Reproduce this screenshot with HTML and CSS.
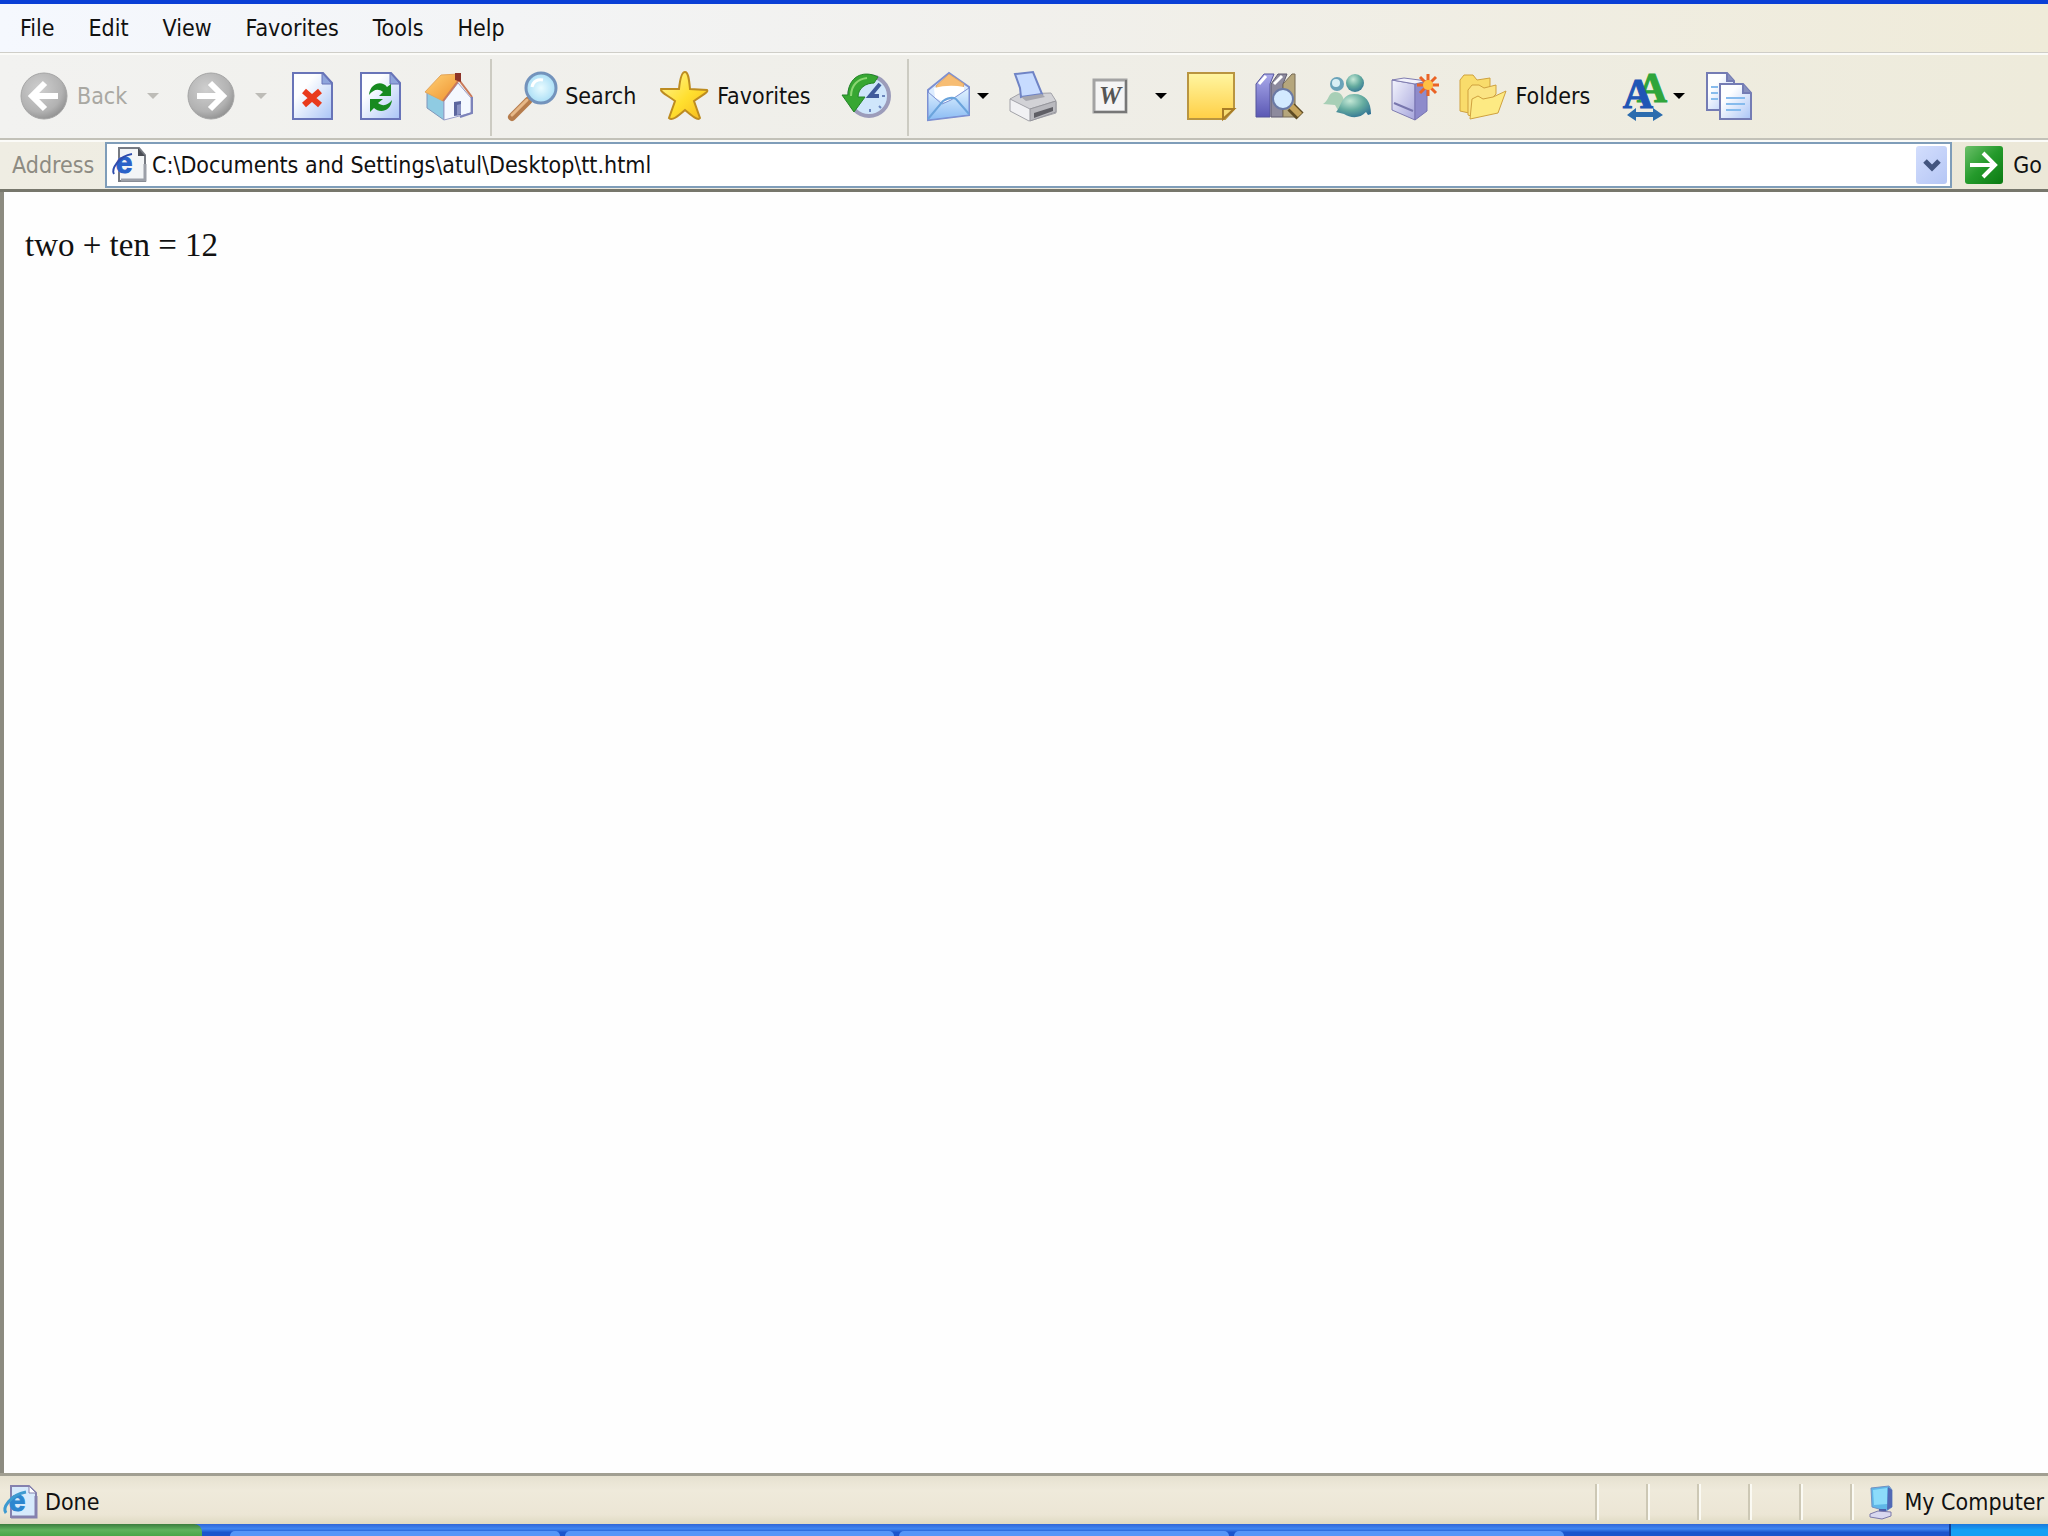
FILE: index.html
```html
<!DOCTYPE html>
<html lang="en">
<head>
<meta charset="utf-8">
<title>tt.html</title>
<link rel="stylesheet" href="styles.css">
</head>
<body>
<svg class="defs" aria-hidden="true">
  <defs>
    <radialGradient id="disc" cx=".4" cy=".35" r=".7"><stop offset="0" stop-color="#cfcfcf"/><stop offset=".7" stop-color="#b2b2b2"/><stop offset="1" stop-color="#8e8e8e"/></radialGradient>
    <linearGradient id="sheet" x1="0" y1="0" x2="1" y2="1"><stop offset=".3" stop-color="#fdfeff"/><stop offset="1" stop-color="#a9c4f6"/></linearGradient>
    <linearGradient id="roof" x1="0" y1="0" x2="1" y2="1"><stop offset="0" stop-color="#ffd277"/><stop offset="1" stop-color="#ee8f2b"/></linearGradient>
    <linearGradient id="note" x1="0" y1="0" x2="0" y2="1"><stop offset="0" stop-color="#fff6a2"/><stop offset="1" stop-color="#ffcf45"/></linearGradient>
    <linearGradient id="gold" x1="0" y1="0" x2="1" y2="1"><stop offset="0" stop-color="#fff59a"/><stop offset=".55" stop-color="#ffdf2e"/><stop offset="1" stop-color="#f7b71c"/></linearGradient>
    <radialGradient id="glass"><stop offset="0" stop-color="#e9fbff"/><stop offset="1" stop-color="#a9def6"/></radialGradient>
    <linearGradient id="mail" x1="0" y1="0" x2="0" y2="1"><stop offset="0" stop-color="#e4f4ff"/><stop offset="1" stop-color="#8bbcf4"/></linearGradient>
    <linearGradient id="book" x1="0" y1="0" x2="0" y2="1"><stop offset="0" stop-color="#a9a9ea"/><stop offset="1" stop-color="#5b58b4"/></linearGradient>
    <radialGradient id="teal" cx=".4" cy=".3" r=".8"><stop offset="0" stop-color="#c4e8d6"/><stop offset=".5" stop-color="#64ab9f"/><stop offset="1" stop-color="#2c6d92"/></radialGradient>
    <linearGradient id="box" x1="0" y1="0" x2="1" y2="1"><stop offset="0" stop-color="#f3f4fd"/><stop offset="1" stop-color="#a7a6dc"/></linearGradient>
    <linearGradient id="go" x1="0" y1="0" x2="1" y2="1"><stop offset="0" stop-color="#6cc06a"/><stop offset=".5" stop-color="#249a2b"/><stop offset="1" stop-color="#0b7a12"/></linearGradient>
  </defs>
</svg>

<nav class="menu" aria-label="Menu bar">
  <button class="menu-item">File</button>
  <button class="menu-item">Edit</button>
  <button class="menu-item">View</button>
  <button class="menu-item">Favorites</button>
  <button class="menu-item">Tools</button>
  <button class="menu-item">Help</button>
</nav>

<div class="toolbar" role="toolbar" aria-label="Standard buttons">
  <button class="tool history-nav back" disabled>
    <svg class="icon" viewBox="0 0 48 48"><circle cx="24" cy="24" r="23" fill="url(#disc)" stroke="#a5a5a5"/><path d="M38 24H12M25 11 12 24l13 13" fill="none" stroke="#fff" stroke-width="6"/></svg>
    <span class="label">Back</span>
    <svg class="arrow" viewBox="0 0 12 6"><path d="M0 0h12L6 6z"/></svg>
  </button>
  <button class="tool history-nav" disabled aria-label="Forward">
    <svg class="icon" viewBox="0 0 48 48"><circle cx="24" cy="24" r="23" fill="url(#disc)" stroke="#a5a5a5"/><path d="M10 24h26M23 11l13 13-13 13" fill="none" stroke="#fff" stroke-width="6"/></svg>
    <svg class="arrow" viewBox="0 0 12 6"><path d="M0 0h12L6 6z"/></svg>
  </button>
  <button class="tool" aria-label="Stop">
    <svg class="icon" viewBox="0 0 48 48"><path d="M4 1h30l9 10v36H4z" fill="url(#sheet)" stroke="#6874b8" stroke-width="2"/><path d="M33 1v11h10z" fill="#8fa5dc" stroke="#6874b8"/><path d="M15 19l16 14M31 19 15 33" stroke="#e93a1c" stroke-width="6"/></svg>
  </button>
  <button class="tool" aria-label="Refresh">
    <svg class="icon" viewBox="0 0 48 48"><path d="M4 1h30l9 10v36H4z" fill="url(#sheet)" stroke="#6874b8" stroke-width="2"/><path d="M33 1v11h10z" fill="#8fa5dc" stroke="#6874b8"/><path d="M12 23c1-12 13-15 18-8l4-3v12H22l4-4c-5-4-10-2-14 3zM35 28c-1 11-12 14-18 8l-4 4V27h13l-5 4c5 4 10 2 14-3z" fill="#178a20"/></svg>
  </button>
  <button class="tool" aria-label="Home">
    <svg class="icon" viewBox="0 0 48 48"><path d="M2 20v16l17 12V29z" fill="#8fcbe2" stroke="#7f96bb"/><path d="M19 29 33 11l13 15v15l-27 7z" fill="#f4f8ff" stroke="#9a9fca"/><path d="M0 20 16 3l18-1 1 4-17 23z" fill="url(#roof)" stroke="#e3a65c"/><path d="M18 29 34 8l13 17" fill="none" stroke="#c9795a" stroke-width="2"/><path d="M47 25v16l-12 4" fill="none" stroke="#7d83ba" stroke-width="2"/><path d="M30 1h6v9l-6-2z" fill="#8c3327"/><path d="M29 30l7-1v14l-7 1z" fill="#5c669e"/><path d="M32 33l4-1v10l-4 1z" fill="#8a93c4"/></svg>
  </button>
  <span class="divider"></span>
  <button class="tool labelled search">
    <svg class="icon" viewBox="0 0 48 48"><path d="M4 45 20 29" stroke="#b67c4c" stroke-width="8" stroke-linecap="round"/><path d="M4 43 19 28" stroke="#e7b887" stroke-width="3" stroke-linecap="round"/><circle cx="33" cy="16" r="15" fill="url(#glass)" stroke="#7393bc" stroke-width="3"/><path d="M24 15c1-6 6-8 11-7" fill="none" stroke="#fff" stroke-width="3"/></svg>
    <span class="label">Search</span>
  </button>
  <button class="tool labelled">
    <svg class="icon" viewBox="0 0 48 48"><path d="M25 0c3 0 4 6 5 17l17 1c2 2-5 5-13 11l6 17c-2 3-8-2-15-8-8 7-13 11-16 8l6-17C7 23 0 20 1 17l18 0C20 7 22 0 25 0z" fill="url(#gold)" stroke="#bd8c21" stroke-width="2"/></svg>
    <span class="label">Favorites</span>
  </button>
  <button class="tool" aria-label="History">
    <svg class="icon" viewBox="0 0 48 48"><circle cx="27" cy="24" r="20" fill="#cfe6fb" stroke="#9c9cba" stroke-width="4"/><path d="M38 12 28 24h9" fill="none" stroke="#415c9c" stroke-width="4"/><path d="M28 9v3M43 24h-3M28 40v-3M39 36l-2-2" fill="none" stroke="#6c86bd" stroke-width="2"/><path d="M36 5C20-3 6 6 6 23H0l12 17 11-15h-7c0-9 8-14 16-14z" fill="#37a732" stroke="#258428"/><path d="M9 24c0-11 7-17 16-18" fill="none" stroke="#8bd672" stroke-width="2"/></svg>
  </button>
  <span class="divider"></span>
  <button class="tool split" aria-label="Mail">
    <svg class="icon" viewBox="0 0 48 48"><path d="M3 18 24 1l20 14v28L3 48z" fill="#dcecff" stroke="#7c90d2" stroke-width="2"/><path d="M11 14 24 2l15 10-3 12-22 1z" fill="#f7bd73" stroke="#d9a26b"/><path d="M9 16q15-4 30-1v10l-14 7-15-6z" fill="#fff"/><path d="M3 20l14 12 9-4 18-12v27L3 48z" fill="url(#mail)" stroke="#7c90d2"/><path d="M3 47 18 29q8-5 13-2l13 15" fill="none" stroke="#6ba4dc" stroke-width="2"/></svg>
    <svg class="arrow" viewBox="0 0 12 6"><path d="M0 0h12L6 6z"/></svg>
  </button>
  <button class="tool" aria-label="Print">
    <svg class="icon" viewBox="0 0 48 48"><path d="M1 27v12l19 10 27-8V30z" fill="#f1f1f3" stroke="#a2a2a8"/><path d="M1 27 10 22l32-1 5 8-26 8z" fill="#d2d2d6" stroke="#a2a2a8"/><path d="M6 2 24 0l9 22-21 3-1-9z" fill="#c7dbff" stroke="#6f83c5" stroke-width="2"/><path d="M12 25l21-3 3 3-19 4z" fill="#a6a6ae"/><path d="M21 37l26-8v11l-26 9z" fill="#b9b9be" stroke="#96969c"/><path d="M25 41l19-6v4l-19 7z" fill="#5f5f65"/></svg>
  </button>
  <button class="tool split-wide" aria-label="Edit with Word">
    <svg class="icon" viewBox="0 0 48 48"><path d="M8 8h32v32H8z" fill="#f5f5f5" stroke="#a3a3a3" stroke-width="3"/><path d="M40 8v32H8" fill="none" stroke="#777" stroke-width="2"/><text x="24" y="32" class="word-mark">W</text></svg>
    <svg class="arrow" viewBox="0 0 12 6"><path d="M0 0h12L6 6z"/></svg>
  </button>
  <button class="tool" aria-label="Notes">
    <svg class="icon" viewBox="0 0 48 48"><path d="M1 1h46v36l-9 10H1z" fill="url(#note)" stroke="#b99540" stroke-width="2"/><path d="M36 47V37h11z" fill="#f7dc73" stroke="#a87c26" stroke-width="2"/></svg>
  </button>
  <button class="tool" aria-label="Research">
    <svg class="icon" viewBox="0 0 48 48"><path d="M1 12 9 2h10l-4 10v33H1z" fill="url(#book)" stroke="#55549b"/><path d="M16 12 23 2h9l-4 10v33H16z" fill="#8d8a9d" stroke="#5e5b70"/><path d="M28 12l9-10h3v43H28z" fill="#b5a67c" stroke="#766b55"/><path d="M4 12 11 4M19 12l8-8" stroke="#fff" stroke-width="3"/><path d="M36 35l9 9" stroke="#5f4c24" stroke-width="10"/><path d="M36 34l9 9" stroke="#c5a45d" stroke-width="6"/><circle cx="28" cy="27" r="10" fill="#d3eaff" stroke="#6a7aa6" stroke-width="2"/></svg>
  </button>
  <button class="tool" aria-label="Messenger">
    <svg class="icon" viewBox="0 0 48 48"><path d="M0 32c6-3 5-12 12-12 7 0 9 6 10 14l-6 6-4-7z" fill="#a8cfb6"/><circle cx="14" cy="12" r="7" fill="#6aa3b9"/><circle cx="13" cy="11" r="4" fill="#d8eff5"/><path d="M13 40c5-4 5-18 18-18 12 0 17 8 17 20l-3 1-2-3c-6 7-16 6-22 2z" fill="url(#teal)"/><circle cx="32" cy="11" r="9" fill="url(#teal)"/></svg>
  </button>
  <button class="tool" aria-label="New window">
    <svg class="icon" viewBox="0 0 48 48"><path d="M1 8 24 12v36L1 38z" fill="url(#box)" stroke="#7f7cb0"/><path d="M24 12l12-3v30L24 48z" fill="#8e8bcb" stroke="#7673b2"/><path d="M1 8 13 6l23 3-12 3z" fill="#f2f2fb" stroke="#7f7cb0"/><path d="M3 31l19 8" stroke="#7876ad" stroke-width="2"/><path d="M37 2v22M26 13h22M29 5l16 16M45 5 29 21" stroke="#ea6325" stroke-width="3"/><circle cx="37" cy="13" r="5" fill="#ffc044"/></svg>
  </button>
  <button class="tool labelled">
    <svg class="icon" viewBox="0 0 48 48"><g stroke="#cfa13f"><path d="M1 39V8l4-5h9l4 5 13-2v8L10 41z" fill="#f9dc6b"/><path d="M9 43V18l4-5h7l5 3 12-3v9L15 45z" fill="#fbe483"/><path d="M11 47l2-20 6-3 5 3 10-2 13-6-8 22z" fill="#fdea83"/></g></svg>
    <span class="label">Folders</span>
  </button>
  <button class="tool split" aria-label="Text size">
    <svg class="icon" viewBox="0 0 48 48"><text x="31" y="30" class="size-mark size-mark-back">A</text><text x="17" y="36" class="size-mark">A</text><path d="M6 43 15 36v4h17v-4l10 7-10 6v-4H15v4z" fill="#2b6cae"/></svg>
    <svg class="arrow" viewBox="0 0 12 6"><path d="M0 0h12L6 6z"/></svg>
  </button>
  <button class="tool" aria-label="Copy">
    <svg class="icon" viewBox="0 0 48 48"><g fill="url(#sheet)" stroke="#747cb4" stroke-width="2"><path d="M2 1h20l7 8v29H2z"/><path d="M22 1v8h7" fill="#8790bd"/><path d="M15 12h23l8 9v26H15z"/><path d="M38 12v9h8" fill="#8790bd"/></g><path d="M6 15h7M6 21h7M6 27h7M21 26h19M21 32h19M21 38h15" stroke="#86bbed" stroke-width="2"/></svg>
  </button>
</div>

<form class="address">
  <label class="address-label" for="url">Address</label>
  <div class="combo">
    <svg class="page-icon" viewBox="0 0 36 36"><path d="M8 1h20l6 7v26H8z" fill="#f3f5f6" stroke="#777b83" stroke-width="2"/><path d="M27 1v8h7z" fill="#4a4d54"/><path d="M10 33h24V17" fill="none" stroke="#9ca0a8" stroke-width="3"/><text x="13" y="26" class="ie-mark">e</text><path d="M3 27C0 22 8 9 21 7" fill="none" stroke="#2f4dad" stroke-width="2"/></svg>
    <input id="url" class="url" type="text" value="C:\Documents and Settings\atul\Desktop\tt.html" spellcheck="false">
    <button class="drop" type="button" aria-label="Show addresses"><svg viewBox="0 0 18 13"><path d="M2 2l7 7 7-7" fill="none" stroke="#43557f" stroke-width="5"/></svg></button>
  </div>
  <button class="go" type="button">
    <svg class="go-icon" viewBox="0 0 38 38"><rect width="38" height="38" rx="3" fill="url(#go)"/><path d="M5 19h23M18 7l12 12-12 12" fill="none" stroke="#fff" stroke-width="4"/></svg>
    <span>Go</span>
  </button>
</form>

<main class="document">
  <p class="result">two + ten = 12</p>
</main>

<footer class="status">
  <svg class="page-icon" viewBox="0 0 36 36"><path d="M9 2h18l7 7v24H9z" fill="#d7eafc" stroke="#8581ae" stroke-width="2"/><path d="M27 2v7h7z" fill="#fff" stroke="#8581ae"/><path d="M9 33h25V12" fill="none" stroke="#8581ae" stroke-width="3"/><text x="15" y="27" class="ie-mark ie-mark-light">e</text><path d="M4 29C0 24 8 11 24 8" fill="none" stroke="#3d9ad0" stroke-width="3"/></svg>
  <span class="status-text">Done</span>
  <span class="pane"></span><span class="pane"></span><span class="pane"></span><span class="pane"></span><span class="pane"></span>
  <span class="zone">
    <svg class="zone-icon" viewBox="0 0 24 34"><path d="M2 3 20 1l3 4v17l-6 4L3 22z" fill="#5fb7e8" stroke="#7291c2"/><path d="M4 5l14-2v16L5 20z" fill="#8cdcfa"/><path d="M19 2l4 3v17l-5 3z" fill="#5269b5"/><path d="M10 24h7v4h-7z" fill="#4c61ac"/><path d="M1 29l8-3 13 1v4l-9 3-12-2z" fill="#d9d8ef" stroke="#7b79a9"/></svg>
    <span>My Computer</span>
  </span>
</footer>

<div class="taskbar">
  <span class="start"></span>
  <span class="tasks"><span class="task"></span><span class="task"></span><span class="task"></span><span class="task"></span></span>
  <span class="tray"></span>
</div>
</body>
</html>
```
FILE: styles.css
```css
* {
  box-sizing: border-box;
}

body {
  margin: 0;
  min-height: 100vh;
  display: flex;
  flex-direction: column;
  border-top: 4px solid #0a3fd6;
  background: #efecdf;
  color: #111;
  font: 23px/28px "DejaVu Sans Condensed", "Noto Sans", sans-serif;
}

button,
input {
  margin: 0;
  padding: 0;
  border: 0;
  background: none;
  color: inherit;
  font: inherit;
}

svg {
  display: block;
  flex: none;
  overflow: visible;
}

.defs {
  position: absolute;
  width: 0;
  height: 0;
}

/* Menu bar */
.menu {
  display: flex;
  height: 49px;
  padding-left: 3px;
  border-bottom: 1px solid #cfcec8;
  background: linear-gradient(90deg, #f5f8fe, #f1f0ec 50%, #efebd9);
}

.menu-item {
  padding: 0 17px;
}

/* Toolbar */
.toolbar {
  display: flex;
  align-items: center;
  height: 87px;
  padding: 0 10px 2px;
  border-top: 2px solid #fbfbf8;
  border-bottom: 2px solid #c2c1b8;
  background: linear-gradient(90deg, #f2f2f0, #efeee8 50%, #eeebdb);
}

.tool {
  display: flex;
  align-items: center;
  flex: none;
  height: 68px;
  padding: 0 10px;
}

.icon {
  width: 48px;
  height: 48px;
}

.arrow {
  width: 12px;
  height: 6px;
  fill: #000;
}

.history-nav {
  padding-right: 12px;
  color: #a9a8a2;
}

.history-nav .arrow {
  margin-left: 20px;
  fill: #bdbcb7;
}

.back {
  padding-right: 18px;
}

.label {
  margin-left: 9px;
}

.labelled {
  padding-right: 21px;
}

.search {
  padding-right: 14px;
}

.split {
  padding-right: 10px;
}

.split .arrow {
  margin-left: 4px;
}

.split-wide {
  margin-left: 9px;
}

.split-wide .arrow {
  margin-left: 21px;
}

.divider {
  flex: none;
  align-self: stretch;
  width: 2px;
  margin: 4px 6px 0 7px;
  background: #cccbc2;
}

.word-mark {
  fill: #555;
  font: italic bold 25px "Liberation Serif", serif;
  text-anchor: middle;
}

.size-mark {
  fill: #1f55b5;
  stroke: #1f55b5;
  stroke-width: 1px;
  font: bold 42px "Liberation Serif", serif;
  text-anchor: middle;
}

.size-mark-back {
  fill: #2fa53b;
  stroke: #2fa53b;
}

/* Address bar */
.address {
  display: flex;
  align-items: center;
  height: 52px;
  padding: 0 4px 1px 12px;
  border-top: 2px solid #fbfbf8;
  border-bottom: 3px solid #77776c;
  background: linear-gradient(90deg, #efede3, #ece8d8);
}

.address-label {
  width: 93px;
  color: #8d8b82;
}

.combo {
  display: flex;
  flex: 1;
  align-items: center;
  height: 46px;
  padding: 0 3px 0 4px;
  border: 2px solid #7f9db9;
  background: #fff;
}

.page-icon {
  width: 36px;
  height: 36px;
}

.url {
  flex: 1;
  min-width: 0;
  height: 32px;
  margin-left: 5px;
  outline: 0;
}

.drop {
  display: grid;
  place-items: center;
  width: 31px;
  height: 38px;
  border-radius: 3px;
  background: linear-gradient(135deg, #d3defd, #b5c6f5);
}

.drop svg {
  width: 18px;
  height: 13px;
}

.go {
  display: flex;
  align-items: center;
  gap: 10px;
  padding: 0 2px 0 13px;
}

.go-icon {
  width: 38px;
  height: 38px;
}

.ie-mark {
  fill: #2a62c8;
  stroke: #2a62c8;
  font: bold 30px "Liberation Sans", sans-serif;
  text-anchor: middle;
}

.ie-mark-light {
  fill: #2c86cf;
  stroke: #2c86cf;
}

/* Page shown in the browser */
.document {
  flex: 1;
  padding: 33px 21px;
  border-left: 4px solid #8c8b80;
  background: #fefefe;
}

.result {
  margin: 0;
  font: 33px/40px "Liberation Serif", serif;
}

/* Status bar */
.status {
  display: flex;
  align-items: center;
  height: 51px;
  padding: 4px 2px 0 2px;
  border-top: 3px solid #a19f92;
  background: linear-gradient(#e6e1d0, #efeadb 30%, #ece6d5 80%, #dfdac2);
}

.status-text {
  flex: 1;
  margin-left: 7px;
}

.pane,
.zone {
  height: 36px;
  border-left: 2px solid #cdc8b5;
  box-shadow: inset 2px 0 #fbfaf3;
}

.pane {
  width: 51px;
}

.zone {
  display: flex;
  align-items: center;
  gap: 11px;
  padding: 0 2px 0 17px;
}

.zone-icon {
  width: 24px;
  height: 34px;
}

/* Top edge of the taskbar */
.taskbar {
  display: flex;
  height: 12px;
  background: linear-gradient(#2f66d8, #3f86f0 40%, #1b55cc 70%);
}

.start {
  width: 202px;
  border-radius: 0 8px 0 0;
  background: linear-gradient(#3c7d3e, #5fb25d 50%, #4aa548);
}

.tasks {
  display: grid;
  grid-template-columns: repeat(4, 1fr);
  gap: 5px;
  width: 66.5%;
  padding: 7px 0 0 28px;
}

.task {
  border-radius: 5px 5px 0 0;
  background: #5596f8;
}

.tray {
  width: 99px;
  margin-left: auto;
  border-left: 2px solid #123f96;
  background: linear-gradient(#1b78dc, #14a0f4 50%);
}
```
